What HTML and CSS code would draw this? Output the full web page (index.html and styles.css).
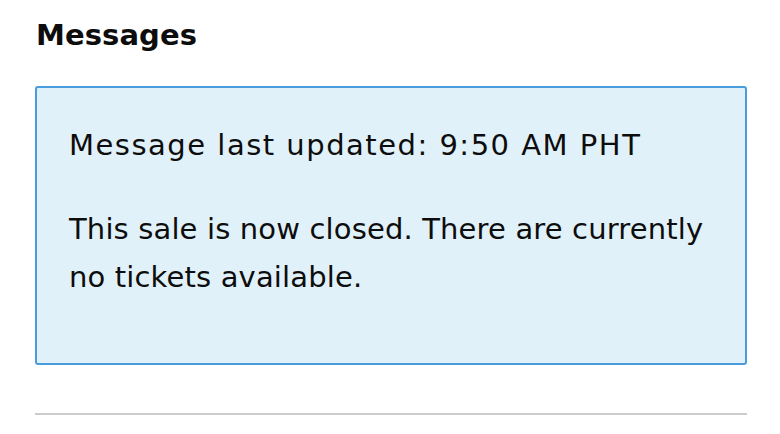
FILE: index.html
```html
<!DOCTYPE html>
<html lang="en">
<head>
<meta charset="utf-8">
<title>Messages</title>
<link rel="stylesheet" href="styles.css">
</head>
<body>
<section class="messages">
  <h2 class="messages__title">Messages</h2>
  <div class="notice">
    <p class="notice__updated">Message last updated: 9:50 AM PHT</p>
    <p class="notice__body">This sale is now closed. There are currently no tickets available.</p>
  </div>
  <hr class="messages__rule">
</section>
</body>
</html>
```

FILE: styles.css
```css
html, body {
  margin: 0;
  padding: 0;
  background: #ffffff;
}

body {
  font-family: "DejaVu Sans", "Noto Sans", "Liberation Sans", sans-serif;
  color: #0d0d0d;
}

.messages {
  padding: 17px 33px 0 35px;
}

.messages__title {
  margin: 0 0 33px 1px;
  font-size: 29px;
  line-height: 36px;
  font-weight: 700;
  letter-spacing: 0.1px;
}

.notice {
  background: #e1f1f9;
  border: 2px solid #4a9ddc;
  border-radius: 3px;
  padding: 33px 32px 62px;
}

.notice p {
  margin: 0;
  font-size: 29px;
  line-height: 48px;
}

.notice__updated {
  margin-bottom: 36px !important;
  letter-spacing: 1.5px;
}

.notice__body {
  letter-spacing: 0.15px;
}

.messages__rule {
  margin: 48px 0 0;
  border: 0;
  height: 2px;
  background: #cccccc;
}
```
